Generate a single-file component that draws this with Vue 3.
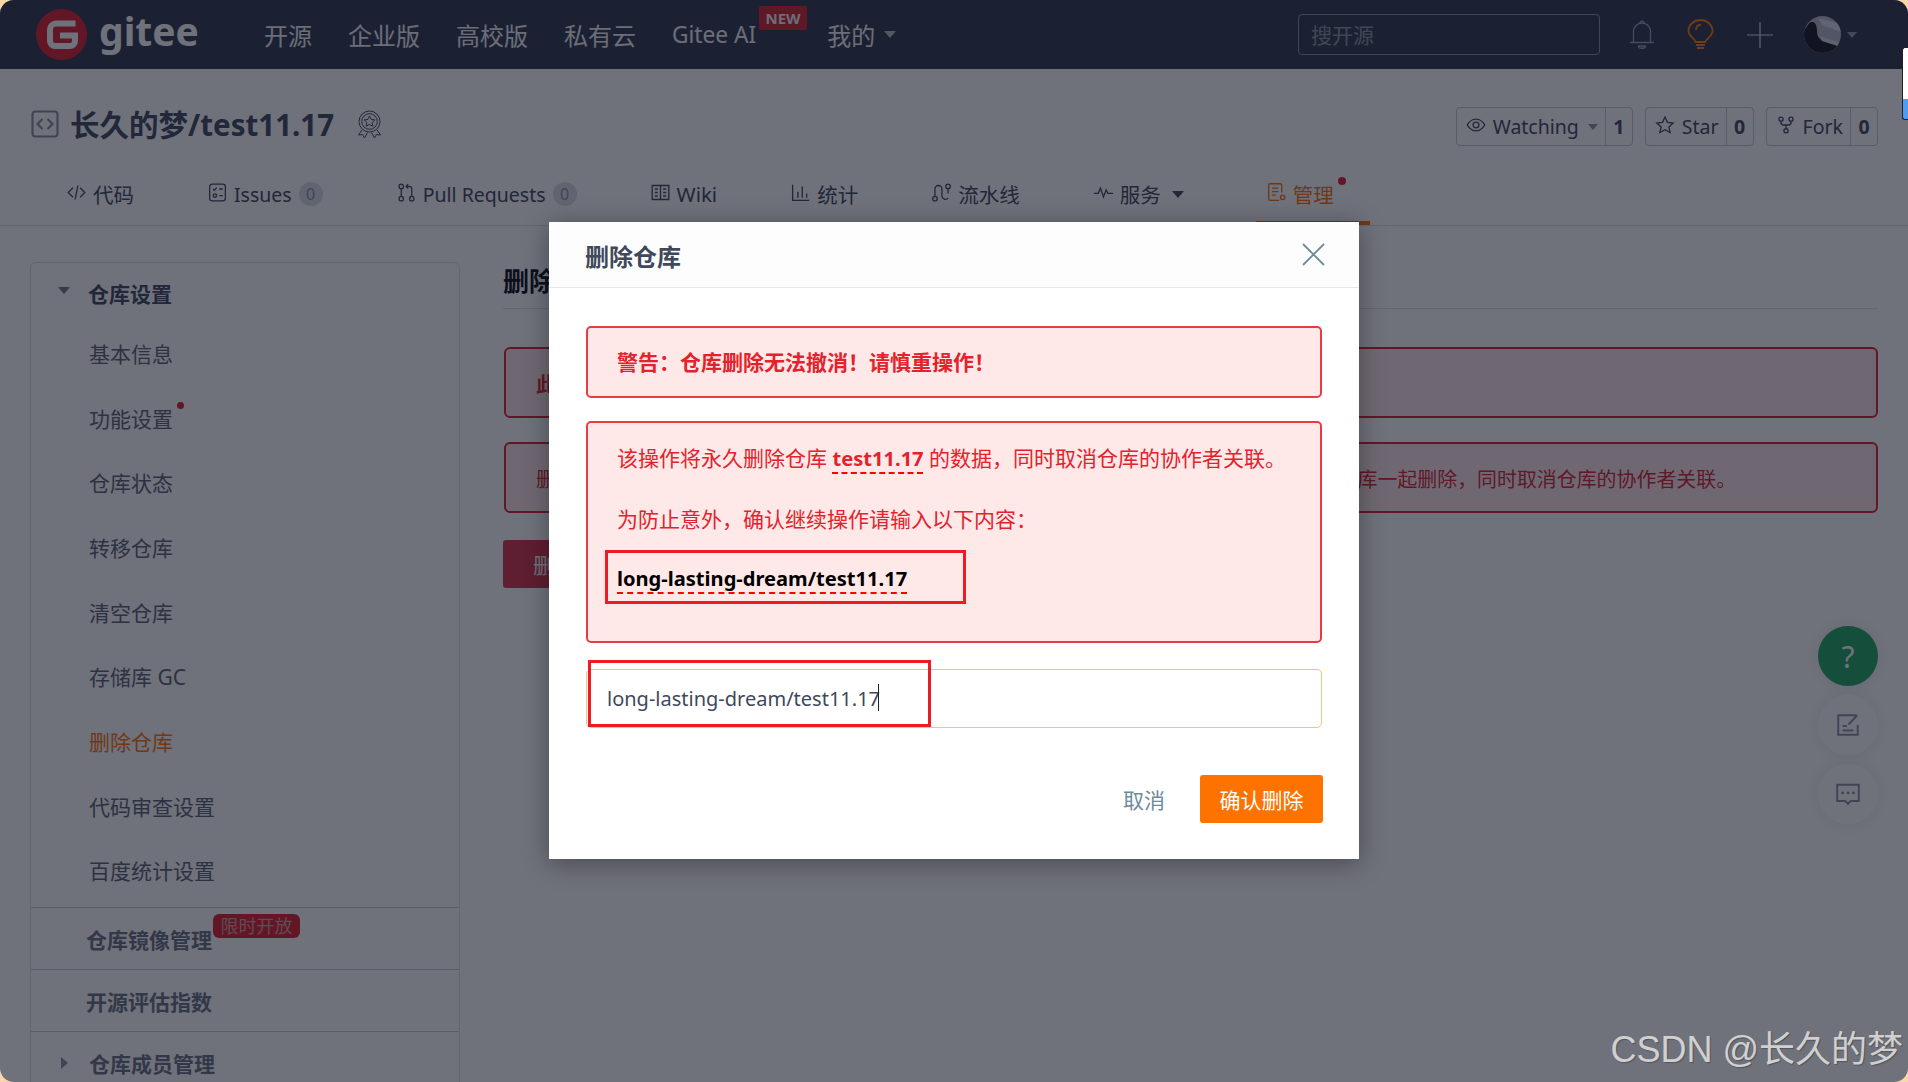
<script setup>
import { ref } from 'vue'

const navLinks = ['开源', '企业版', '高校版', '私有云', 'Gitee AI', '我的']

const tabs = [
  { label: '代码', icon: 'M8 6.500L2.500 12 8 17.500M16 6.500l5.500 5.500-5.500 5.500M13.500 4l-3 16' },
  { label: 'Issues', latin: true, count: 0, icon: 'M6 2.500h12a3 3 0 0 1 3 3v13a3 3 0 0 1-3 3H6a3 3 0 0 1-3-3v-13a3 3 0 0 1 3-3zM7 8l1.500 1.500L11 6.500M14 8h4M14 15.500h4M9 13.500a2 2 0 1 1 0 4 2 2 0 0 1 0-4z' },
  { label: 'Pull Requests', latin: true, count: 0, icon: 'M6 2.500a2.500 2.500 0 1 1 0 5 2.500 2.500 0 0 1 0-5zM6 16.500a2.500 2.500 0 1 1 0 5 2.500 2.500 0 0 1 0-5zM18 16.500a2.500 2.500 0 1 1 0 5 2.500 2.500 0 0 1 0-5zM6 7.500v9M18 16.500V8a3 3 0 0 0-3-3h-3M14 2.500L11.500 5l2.500 2.500' },
  { label: 'Wiki', icon: 'M2.500 4h19v16h-19zM12 4v16M5.500 8h3.500M5.500 12h3.500M5.500 16h3.500M15 8h3.500M15 12h3.500M15 16h3.500' },
  { label: '统计', icon: 'M3 3v18h19M9 11v7M14 5v13M19 13v5' },
  { label: '流水线', icon: 'M4.500 16.500V8a4 4 0 0 1 8 0v8a4 4 0 0 0 7 2.500M19.500 7.500a2.500 2.500 0 1 1 0-5 2.500 2.500 0 0 1 0 5zM19.500 7.500V13M4.500 16.500a2.500 2.500 0 1 1 0 5 2.500 2.500 0 0 1 0-5z' },
  { label: '服务', caret: true, icon: 'M1 13h5l2.500-6 3.500 10 3-8 2 4h6' },
  { label: '管理', active: true, dot: true, icon: 'M15 21H5a2 2 0 0 1-2-2V4a2 2 0 0 1 2-2h11a2 2 0 0 1 2 2v8M7 7h7M7 11h7M7 15h4M19 15a2.500 2.500 0 1 1 0 5 2.500 2.500 0 0 1 0-5z' },
]

const repoActions = [
  { label: 'Watching', count: 1, caret: true, icon: 'M1.500 12s4-7 10.500-7 10.500 7 10.500 7-4 7-10.500 7-10.500-7-10.500-7zM12 8.500a3.500 3.500 0 1 1 0 7 3.500 3.500 0 0 1 0-7z' },
  { label: 'Star', count: 0, icon: 'M12 2.500l2.900 6.300 6.900.8-5.100 4.700 1.400 6.800L12 17.700l-6.100 3.400 1.400-6.800-5.100-4.700 6.900-.8z' },
  { label: 'Fork', count: 0, icon: 'M6 2.500a2.500 2.500 0 1 1 0 5 2.500 2.500 0 0 1 0-5zM18 2.500a2.500 2.500 0 1 1 0 5 2.500 2.500 0 0 1 0-5zM12 16.500a2.500 2.500 0 1 1 0 5 2.500 2.500 0 0 1 0-5zM6 7.500V9a3 3 0 0 0 3 3h6a3 3 0 0 0 3-3V7.500M12 12v4.500' },
]

const settingItems = [
  { label: '基本信息' },
  { label: '功能设置', dot: true },
  { label: '仓库状态' },
  { label: '转移仓库' },
  { label: '清空仓库' },
  { label: '存储库 GC' },
  { label: '删除仓库', active: true },
  { label: '代码审查设置' },
  { label: '百度统计设置' },
]

const confirmText = ref('long-lasting-dream/test11.17')
</script>

<template>
  <div class="frame">
    <header class="topnav">
      <a class="logo">
        <svg class="logo-mark" viewBox="0 0 51 51">
          <circle cx="25.500" cy="25.500" r="25.500" fill="#e0202b" />
          <path d="M39.500 14.500H20a6 6 0 0 0-6 6V32a5 5 0 0 0 5 5h15a5 5 0 0 0 5-5v-5.500H24" fill="none" stroke="#fff" stroke-width="6" />
        </svg>
        <span class="logo-text">gitee</span>
      </a>
      <nav class="nav-links">
        <a v-for="link in navLinks" :key="link" class="nav-link" :class="{ 'nav-latin': link === 'Gitee AI' }">
          {{ link }}
          <span v-if="link === 'Gitee AI'" class="new-badge">NEW</span>
          <i v-if="link === '我的'" class="caret nav-caret" />
        </a>
      </nav>
      <div class="nav-right">
        <input class="search" placeholder="搜开源" />
        <svg class="nav-icon bell" viewBox="0 0 26 30" fill="none" stroke="#a5b5d0" stroke-width="1.300">
          <path d="M1 22.500h24M4.500 22.500V11.500a8.500 8.500 0 0 1 17 0v11M11 3.200c0-2.800 4-2.800 4 0M9.500 26h7c0 3-7 3-7 0z" />
        </svg>
        <svg class="nav-icon bulb" viewBox="0 0 27 31" fill="none" stroke="#ff7a00" stroke-width="1.800">
          <path d="M8.500 23c0-3.500-7-5.500-7-11a12 11 0 0 1 24 0c0 5.500-7 7.500-7 11zM9 26h9M10 29h7M9 11c0-3 2-5 5-5.500" />
        </svg>
        <svg class="nav-icon plus" viewBox="0 0 26 26" fill="none" stroke="#fff" stroke-width="1.200">
          <path d="M13 0v26M0 13h26" />
        </svg>
        <svg class="avatar" viewBox="0 0 37 37">
          <defs>
            <clipPath id="avatar-clip"><circle cx="18.500" cy="18.500" r="18.500" /></clipPath>
          </defs>
          <g clip-path="url(#avatar-clip)">
            <rect width="37" height="37" fill="#b5bac8" />
            <path d="M14 2l23 6v8L18 9z" fill="#dcdfe6" />
            <path d="M0 37V14c3-2 4-8 8-8s5 5 5 9c0 5 2 8 6 10l18 6v6z" fill="#14161f" />
            <path d="M16 20l21 7v4l-19-6z" fill="#d4d7df" />
          </g>
        </svg>
        <i class="caret avatar-caret" />
      </div>
      <div class="scroll-thumb" />
    </header>

    <section class="repo-head">
      <div class="title-row">
        <svg class="repo-icon" viewBox="0 0 28 28" fill="none" stroke-width="2.200">
          <rect x="1.500" y="1.500" width="25" height="25" rx="3" stroke="#8a92a2" />
          <path d="M11.500 9l-5 5 5 5M16.500 9l5 5-5 5" stroke="#8a92a2" />
        </svg>
        <h1 class="repo-title">长久的梦/test11.17</h1>
        <svg class="medal" viewBox="0 0 29 29" fill="none" stroke="#40485b" stroke-width="1">
          <circle cx="14.500" cy="11.500" r="10.500" />
          <circle cx="14.500" cy="11.500" r="7.800" />
          <path d="M14.500 6l1.700 3.400 3.700.5-2.700 2.600.6 3.700-3.300-1.700-3.300 1.700.6-3.700-2.700-2.600 3.700-.5zM7 20l-3.500 5 4-.500 2 3.500 3-5.500M22 20l3.500 5-4-.500-2 3.500-3-5.500" />
        </svg>
        <div class="repo-actions">
          <div v-for="action in repoActions" :key="action.label" class="repo-action">
            <span class="action-main">
              <svg class="action-icon" viewBox="0 0 24 24" fill="none" stroke="currentColor" stroke-width="1.600">
                <path :d="action.icon" />
              </svg>
              {{ action.label }}
              <i v-if="action.caret" class="caret action-caret" />
            </span>
            <span class="action-count">{{ action.count }}</span>
          </div>
        </div>
      </div>
      <nav class="tabs">
        <a v-for="tab in tabs" :key="tab.label" class="tab" :class="{ 'tab-active': tab.active, 'tab-latin': tab.latin }">
          <svg class="tab-icon" viewBox="0 0 24 24" fill="none" stroke="currentColor" stroke-width="1.500">
            <path :d="tab.icon" />
          </svg>
          {{ tab.label }}
          <span v-if="tab.count !== undefined" class="tab-count">{{ tab.count }}</span>
          <i v-if="tab.caret" class="caret tab-caret" />
          <span v-if="tab.dot" class="tab-dot" />
        </a>
      </nav>
    </section>

    <div class="content">
      <aside class="sidebar">
        <div class="side-title"><i class="caret side-caret" />仓库设置</div>
        <ul class="side-list">
          <li v-for="item in settingItems" :key="item.label" class="side-item" :class="{ 'side-active': item.active }">
            <span class="side-label">
              {{ item.label }}
              <span v-if="item.dot" class="side-dot" />
            </span>
          </li>
        </ul>
        <div class="side-section">
          仓库镜像管理<span class="limited">限时开放</span>
        </div>
        <div class="side-section">开源评估指数</div>
        <div class="side-section side-members"><i class="caret-right" />仓库成员管理</div>
      </aside>

      <main class="main">
        <h2 class="main-title">删除仓库</h2>
        <div class="danger-box danger-strong">此操作不可恢复</div>
        <div class="danger-box">删除仓库后，该仓库内的全部代码、Issues、Pull Requests、Wiki等所有数据也都将会随着仓库一起删除，同时取消仓库的协作者关联。</div>
        <button class="danger-btn">删除仓库</button>
      </main>
    </div>

    <div class="float-actions">
      <div class="float-btn float-help">?</div>
      <div class="float-btn">
        <svg viewBox="0 0 24 24" fill="none" stroke="#8a92a2" stroke-width="1.800">
          <path d="M20 3h-17v18h18v-9M20.500 3l-8 8.500M7 17h10M7 13h4" />
        </svg>
      </div>
      <div class="float-btn">
        <svg viewBox="0 0 24 24" fill="none" stroke="#8a92a2" stroke-width="1.800">
          <path d="M2 3.500h20v15h-7.500L12 21l-2.500-2.500H2z" />
          <path d="M7 11h.1M12 11h.1M17 11h.1" stroke-width="2.600" stroke-linecap="round" />
        </svg>
      </div>
    </div>

    <div class="overlay">
      <div class="modal">
        <div class="modal-head">
          <span class="modal-title">删除仓库</span>
          <svg class="modal-close" viewBox="0 0 23 23" fill="none" stroke="#6f8a9a" stroke-width="1.800">
            <path d="M1 1l21 21M22 1L1 22" />
          </svg>
        </div>
        <div class="modal-body">
          <div class="alert alert-title">警告：仓库删除无法撤消！请慎重操作！</div>
          <div class="alert alert-detail">
            <p>该操作将永久删除仓库 <b class="dashed">test11.17</b> 的数据，同时取消仓库的协作者关联。</p>
            <p>为防止意外，确认继续操作请输入以下内容：</p>
            <p><b class="dashed code">long-lasting-dream/test11.17</b></p>
            <span class="mark mark-code" />
          </div>
          <div class="confirm-wrap">
            <input v-model="confirmText" class="confirm-input" />
            <span class="input-caret" />
            <span class="mark mark-input" />
          </div>
          <div class="modal-foot">
            <a class="cancel">取消</a>
            <button class="confirm-btn">确认删除</button>
          </div>
        </div>
      </div>
    </div>

    <div class="watermark">CSDN @长久的梦</div>
  </div>
</template>

<style>
html, body {
  margin: 0;
  background: #fdd6a8;
}
</style>

<style scoped>
.frame {
  position: relative;
  width: 1908px;
  height: 1082px;
  overflow: hidden;
  border-radius: 14px;
  background: #fff;
  color: #40485b;
  font-family: "Noto Sans", "Noto Sans CJK SC", sans-serif;
  font-size: 21px;
}

.caret {
  display: inline-block;
  width: 0;
  height: 0;
  border-left: 6.500px solid transparent;
  border-right: 6.500px solid transparent;
  border-top: 7px solid currentColor;
}

/* top bar */
.topnav {
  position: relative;
  display: flex;
  align-items: center;
  height: 69px;
  padding-left: 36px;
  background: #2f394b;
  color: #fff;
}
.logo {
  display: flex;
  align-items: center;
  width: 228px;
}
.logo-mark {
  width: 51px;
  height: 51px;
}
.logo-text {
  margin-left: 12px;
  margin-top: -8px;
  font-size: 39px;
  font-weight: 700;
  line-height: 1;
}
.nav-links {
  display: flex;
  align-items: center;
  gap: 36px;
}
.nav-link {
  position: relative;
  display: flex;
  align-items: center;
  font-size: 24px;
  white-space: nowrap;
  opacity: 0.95;
}
.nav-latin {
  font-size: 22.700px;
}
.nav-link:last-child {
  margin-left: 35px;
}
.nav-caret {
  margin-left: 9px;
  opacity: 0.7;
}
.new-badge {
  position: absolute;
  top: -13px;
  left: 87px;
  width: 48px;
  height: 24px;
  background: #e0202b;
  border-radius: 2px;
  font-size: 15px;
  font-weight: 700;
  line-height: 24px;
  text-align: center;
}
.nav-right {
  position: absolute;
  top: 0;
  left: 1298px;
  display: flex;
  align-items: center;
  height: 69px;
}
.search {
  box-sizing: border-box;
  width: 302px;
  height: 41px;
  padding: 0 12px;
  background: transparent;
  border: 1px solid #8d93a3;
  border-radius: 4px;
  font: inherit;
  font-size: 21px;
}
.search::placeholder {
  color: #fff;
  opacity: 0.45;
}
.nav-icon {
  opacity: 0.85;
}
.bell {
  width: 26px;
  height: 30px;
  margin-left: 29px;
}
.bulb {
  width: 27px;
  height: 31px;
  margin-left: 32px;
  opacity: 1;
}
.plus {
  width: 26px;
  height: 26px;
  margin-left: 33px;
}
.avatar {
  width: 37px;
  height: 37px;
  margin-left: 31px;
}
.avatar-caret {
  margin-left: 6px;
  border-left-width: 5px;
  border-right-width: 5px;
  border-top-width: 6px;
  opacity: 0.5;
}
.scroll-thumb {
  position: absolute;
  top: 47px;
  left: 1902px;
  width: 6px;
  height: 73px;
  background: linear-gradient(#fff 0 72%, #4c9df5 72%);
  border: 1px solid #222;
  border-right: 0;
  border-radius: 3px 0 0 3px;
  box-sizing: border-box;
  z-index: 2;
}

/* repo header */
.repo-head {
  height: 157px;
  box-sizing: border-box;
  padding-top: 38px;
  border-bottom: 1px solid #dce3e9;
  background: #fff;
}
.title-row {
  display: flex;
  align-items: center;
  height: 39px;
  padding: 0 30px 0 31px;
}
.repo-icon {
  width: 28px;
  height: 28px;
  margin-bottom: 5px;
}
.repo-title {
  margin: 0 0 7px 11px;
  color: #40485b;
  font-size: 29.500px;
  font-weight: 700;
  white-space: nowrap;
}
.medal {
  width: 29px;
  height: 29px;
  margin-left: 21px;
  margin-bottom: 5px;
}
.repo-actions {
  display: flex;
  gap: 12px;
  margin-left: auto;
}
.repo-action {
  display: flex;
  align-items: center;
  height: 39px;
  box-sizing: border-box;
  border: 1px solid #c3cad4;
  border-radius: 4px;
  font-size: 19.500px;
}
.action-main {
  display: flex;
  align-items: center;
  gap: 7px;
  height: 100%;
  padding: 0 7px 0 9px;
  border-right: 1px solid #c3cad4;
}
.action-icon {
  width: 20px;
  height: 20px;
  margin-top: -4px;
}
.action-caret {
  margin-left: 2px;
  border-left-width: 5px;
  border-right-width: 5px;
  border-top-width: 6px;
  opacity: 0.6;
}
.action-count {
  width: 26px;
  font-weight: 700;
  text-align: center;
}
.tabs {
  display: flex;
  align-items: center;
  gap: 73px;
  height: 53px;
  margin-top: 26px;
  padding-left: 66px;
  font-size: 20.500px;
}
.tab {
  position: relative;
  display: flex;
  align-items: center;
  gap: 6px;
  height: 100%;
  padding-bottom: 9px;
  box-sizing: border-box;
  white-space: nowrap;
}
.tab-latin {
  font-size: 19.500px;
}
.tab-icon {
  width: 21px;
  height: 21px;
  margin-top: -4px;
}
.tab-count {
  width: 24px;
  height: 24px;
  margin-left: 1px;
  border-radius: 50%;
  background: #dce1e6;
  color: #8a92a2;
  font-size: 16px;
  line-height: 24px;
  text-align: center;
}
.tab-caret {
  margin-left: 5px;
}
.tab:has(.tab-caret) {
  margin-right: 9px;
}
.tab-active {
  color: #fe7300;
}
.tab-active::after {
  content: "";
  position: absolute;
  left: -10px;
  right: -36px;
  bottom: 0;
  height: 4px;
  background: #fe7300;
}
.tab-dot {
  position: absolute;
  top: 5px;
  right: -12px;
  width: 8px;
  height: 8px;
  border-radius: 50%;
  background: #e0202b;
}

/* page content */
.content {
  display: flex;
  gap: 43px;
  padding: 36px 30px 0 30px;
}
.sidebar {
  flex: none;
  width: 430px;
  box-sizing: border-box;
  border: 1px solid #dce3e9;
  border-radius: 6px;
}
.side-title {
  display: flex;
  align-items: center;
  height: 59px;
  padding-left: 59px;
  box-sizing: border-box;
  color: #40485b;
  font-weight: 700;
}
.side-caret {
  margin-left: -32px;
  margin-right: 18px;
  margin-top: -4px;
  color: #40485b;
  opacity: 0.75;
}
.side-list {
  margin: 0;
  padding: 0 0 3px;
  list-style: none;
}
.side-item {
  display: flex;
  align-items: center;
  height: 64.700px;
  padding-left: 58px;
  padding-bottom: 3px;
  box-sizing: border-box;
  color: #5a6273;
}
.side-label {
  position: relative;
}
.side-active {
  color: #fe7300;
}
.side-dot {
  position: absolute;
  top: -1px;
  right: -11px;
  width: 7px;
  height: 7px;
  border-radius: 50%;
  background: #e0202b;
}
.side-section {
  display: flex;
  align-items: center;
  height: 62px;
  box-sizing: border-box;
  padding-left: 55px;
  border-top: 1px solid #c9ced6;
  color: #6a7080;
  font-weight: 700;
}
.limited {
  align-self: flex-start;
  margin-top: 6px;
  margin-left: 1px;
  padding: 0 7.500px;
  background: #e0202b;
  border-radius: 6px;
  color: #dc9ba1;
  font-size: 18px;
  font-weight: 400;
  line-height: 24px;
}
.side-members {
  padding-left: 30px;
}
.caret-right {
  width: 0;
  height: 0;
  margin-right: 21px;
  border-top: 6px solid transparent;
  border-bottom: 6px solid transparent;
  border-left: 7px solid #8a92a2;
}
.main {
  flex: 1;
  min-width: 0;
  margin-top: 1px;
}
.main-title {
  margin: 0 0 38px;
  height: 46px;
  box-sizing: border-box;
  border-bottom: 1px solid #dce3e9;
  color: #0b0d13;
  font-size: 26px;
  line-height: 36px;
}
.danger-box {
  display: flex;
  align-items: center;
  box-sizing: border-box;
  height: 71px;
  margin: 0 0 24px 1px;
  padding-left: 30px;
  padding-top: 2px;
  background: #ffe8e8;
  border: 2px solid #e0202b;
  border-radius: 6px;
  color: #d8232d;
  font-size: 19.930px;
  white-space: nowrap;
}
.danger-strong {
  font-weight: 700;
}
.danger-btn {
  display: block;
  width: 170px;
  height: 48px;
  margin-top: 27px;
  padding: 0 0 0 30px;
  background: #d8314a;
  border: 0;
  border-radius: 3px;
  color: #fff;
  font: inherit;
  text-align: left;
}
.float-actions {
  position: absolute;
  top: 626px;
  left: 1818px;
  display: flex;
  flex-direction: column;
  gap: 9px;
}
.float-btn {
  display: flex;
  align-items: center;
  justify-content: center;
  width: 60px;
  height: 60px;
  border-radius: 50%;
  background: #fff;
  box-shadow: 0 0 16px rgba(64, 72, 91, 0.1);
}
.float-btn svg {
  width: 26px;
  height: 26px;
}
.float-help {
  background: #1fa75d;
  color: #fff;
  font-size: 30px;
}

/* modal */
.overlay {
  position: absolute;
  inset: 0;
  display: flex;
  justify-content: center;
  padding-top: 222px;
  background: rgba(15, 18, 35, 0.6);
}
.modal {
  width: 810px;
  height: 637px;
  background: #fff;
  box-shadow: 0 4px 24px rgba(0, 0, 0, 0.35);
}
.modal-head {
  display: flex;
  align-items: center;
  justify-content: space-between;
  box-sizing: border-box;
  height: 66px;
  padding: 0 34px 0 36px;
  background: #fdfdfd;
  border-bottom: 1px solid #e4e7ea;
}
.modal-title {
  margin-top: 1px;
  color: #40485b;
  font-size: 24px;
  font-weight: 700;
}
.modal-close {
  width: 23px;
  height: 23px;
}
.modal-body {
  padding: 38px 37px 0;
}
.alert {
  position: relative;
  box-sizing: border-box;
  background: #ffe8e8;
  border: 2px solid #ea3a43;
  border-radius: 5px;
  padding-left: 29px;
  color: #e4222c;
}
.alert-title {
  display: flex;
  align-items: center;
  height: 72px;
  font-weight: 700;
  padding-bottom: 3px;
}
.alert-detail {
  height: 222px;
  margin-top: 23px;
  padding-top: 20px;
}
.alert-detail p {
  margin: 0 0 29.500px;
  line-height: 30px;
  white-space: nowrap;
}
.dashed {
  font-size: 20.100px;
  text-decoration: underline dashed #f00 2px;
  text-underline-offset: 6px;
}
.code {
  color: #000;
}
.mark {
  position: absolute;
  box-sizing: border-box;
  border: 3px solid #ed1c24;
  pointer-events: none;
}
.mark-code {
  top: 127px;
  left: 17px;
  width: 361px;
  height: 54px;
}
.confirm-wrap {
  position: relative;
  height: 59px;
  margin: 26px 0 0 -0.500px;
}
.confirm-input {
  display: block;
  box-sizing: border-box;
  width: 100%;
  height: 100%;
  padding: 0 20.500px;
  background: #fff;
  border: 1px solid #f7c187;
  border-radius: 5px;
  color: #40485b;
  font: inherit;
  font-size: 20px;
  outline: none;
}
.input-caret {
  position: absolute;
  top: 15px;
  left: 292px;
  width: 1px;
  height: 27px;
  background: #222;
}
.mark-input {
  top: -9px;
  left: 2px;
  width: 343px;
  height: 67px;
}
.modal-foot {
  display: flex;
  align-items: center;
  justify-content: flex-end;
  gap: 35px;
  margin: 47px -1px 0 0;
}
.cancel {
  color: #6f8a9a;
}
.confirm-btn {
  width: 123px;
  height: 48px;
  padding: 0;
  background: #fe7300;
  border: 0;
  border-radius: 3px;
  color: #fff;
  font: inherit;
}

.watermark {
  position: absolute;
  right: 5px;
  bottom: 10px;
  color: #d0d0d0;
  font-family: "Liberation Sans", "Noto Sans CJK SC", sans-serif;
  font-size: 36px;
  line-height: 44px;
  text-shadow: 1px 1px 1px rgba(0, 0, 0, 0.25);
  white-space: nowrap;
}
</style>
